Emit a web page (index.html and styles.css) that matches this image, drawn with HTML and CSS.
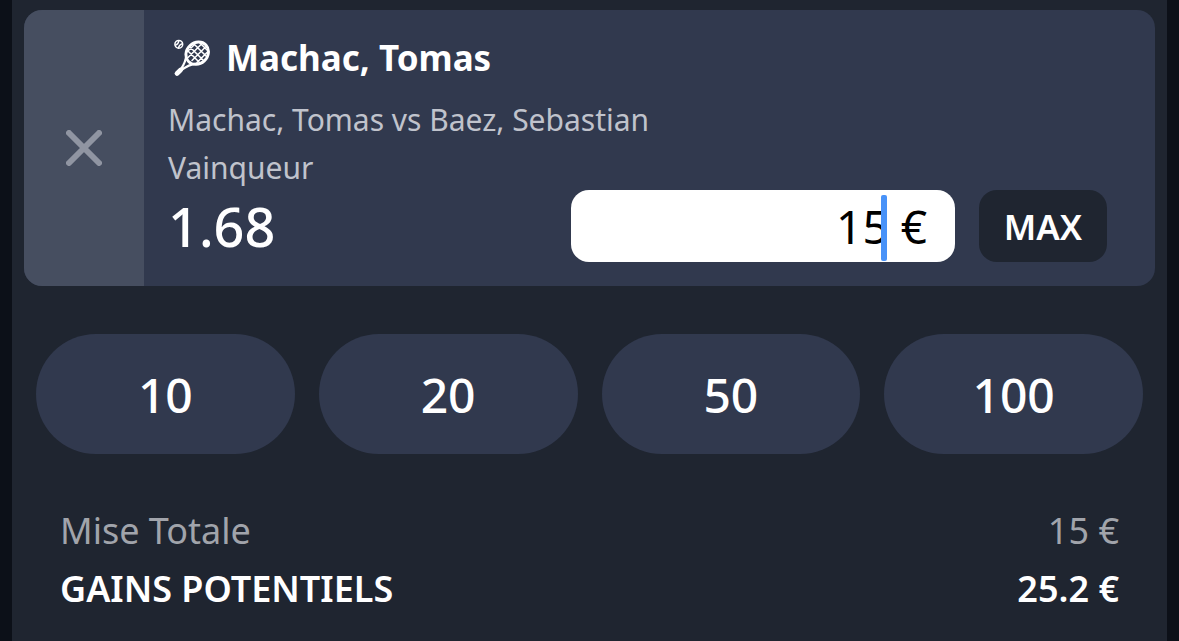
FILE: index.html
```html
<!DOCTYPE html>
<html lang="fr">
<head>
<meta charset="utf-8">
<meta name="viewport" content="width=device-width, initial-scale=1">
<title>Panier de paris</title>
<link rel="stylesheet" href="styles.css">
</head>
<body>
<main class="slip">
  <article class="bet">
    <button class="remove" type="button" aria-label="Supprimer">
      <svg class="remove-icon" viewBox="0 0 36 36" aria-hidden="true"><path d="M3 3 33 33M33 3 3 33"/></svg>
    </button>
    <div class="details">
      <h1 class="pick">
        <svg class="racket" viewBox="0 0 38 38" aria-hidden="true">
          <circle cx="6.8" cy="5.3" r="3.9" stroke-width="1.5"/>
          <path d="M3.5 6.2Q6.3 5.4 6.9 1.6M6.4 9Q7.2 5.7 10.3 4.7" stroke-width="1.3"/>
          <ellipse cx="25.2" cy="14.2" rx="12" ry="10.5" transform="rotate(-43 25.2 14.2)" stroke-width="2.8"/>
          <path d="M16 12 28 24M17.5 7.5 32 22M22 5 35 18M28 4 36 12M23.5 4.5 15.5 12.5M30 4.5 15.5 19M34.5 7 20 21.5M36 12.5 25 23.5" stroke-width="1.5"/>
          <path d="M14.2 15.5Q14.3 22.4 8.3 31.2M24.1 24.7Q17.2 25.3 8.7 31.7M15.8 21.8 18.2 24.2" stroke-width="2.2"/>
          <path d="M5 34.4 8.6 31" stroke-width="4.8"/>
        </svg>
        <span>Machac, Tomas</span>
      </h1>
      <p class="info">Machac, Tomas vs Baez, Sebastian</p>
      <p class="info">Vainqueur</p>
      <div class="stake-row">
        <output class="odds">1.68</output>
        <div class="stake-field">
          <input class="stake" type="text" inputmode="decimal" value="15 €" aria-label="Mise">
          <span class="caret" aria-hidden="true"></span>
        </div>
        <button class="max" type="button">MAX</button>
      </div>
    </div>
  </article>
  <div class="quick">
    <button class="chip" type="button">10</button>
    <button class="chip" type="button">20</button>
    <button class="chip" type="button">50</button>
    <button class="chip" type="button">100</button>
  </div>
  <dl class="totals">
    <div class="total"><dt>Mise Totale</dt><dd>15 €</dd></div>
    <div class="total total-win"><dt>GAINS POTENTIELS</dt><dd>25.2 €</dd></div>
  </dl>
</main>
</body>
</html>
```
FILE: styles.css
```css
* { box-sizing: border-box; }
body {
  margin: 0;
  min-height: 100vh;
  display: flex;
  padding: 0 12px;
  background: #0c1018;
  color: #fff;
  font-family: "Noto Sans", "Open Sans", sans-serif;
}
button, input { font: inherit; border: 0; margin: 0; color: inherit; }
button { cursor: pointer; }
h1, p, dl, dd { margin: 0; }
.slip { flex: 1; min-width: 0; padding: 10px 12px 0; background: #1f2530; }
.bet { display: flex; border-radius: 18px; overflow: hidden; background: #31394e; }
.remove {
  flex: 0 0 120px;
  display: grid;
  place-items: center;
  padding: 0;
  background: #464e60;
}
.remove-icon { width: 36px; height: 36px; fill: none; stroke: #9095a2; stroke-width: 6; stroke-linecap: round; }
.details { flex: 1; min-width: 0; padding: 24px 48px 24px 24px; }
.pick { display: flex; align-items: center; gap: 16px; margin-bottom: 14px; padding-left: 4px; font-size: 35px; line-height: 48px; font-weight: 700; }
.racket { width: 38px; height: 38px; fill: none; stroke: #fff; stroke-linecap: round; }
.info { font-size: 30px; line-height: 48px; color: #c0c3cc; }
.info + .info { margin-bottom: -2px; }
.stake-row { display: flex; align-items: center; gap: 24px; }
.odds { flex: 1; font-size: 54px; line-height: 72px; font-weight: 500; }
.stake-field { position: relative; flex: 0 1 384px; min-width: 0; }
.stake {
  display: block;
  width: 100%;
  height: 72px;
  padding: 0 28px;
  border-radius: 18px;
  background: #fff;
  color: #000;
  font-size: 46px;
  text-align: right;
}
.caret { position: absolute; top: 5px; right: 68px; width: 6px; height: 66px; border-radius: 2px; background: #4892f8; }
.max { flex: 0 0 128px; height: 72px; padding: 0; border-radius: 18px; background: #1f2530; font-size: 35px; font-weight: 600; }
.quick { display: grid; grid-template-columns: repeat(4, 1fr); gap: 24px; padding: 48px 12px; }
.chip { height: 120px; padding: 0; border-radius: 60px; background: #31394e; font-size: 48px; font-weight: 500; }
.totals { padding: 0 36px; font-size: 36px; line-height: 58px; }
.total { display: flex; justify-content: space-between; color: #a1a4ab; }
.total-win { color: #fff; font-weight: 600; }
```
